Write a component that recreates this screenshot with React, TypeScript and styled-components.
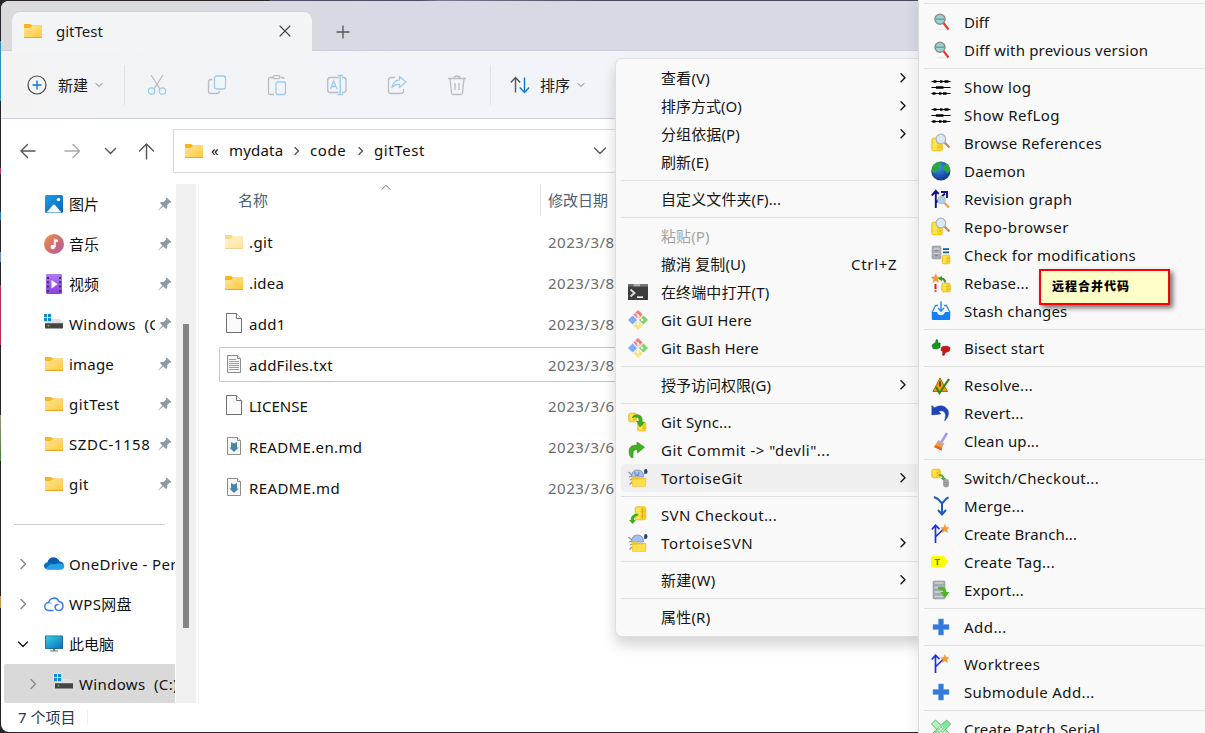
import React from "react";
import styled, { createGlobalStyle } from "styled-components";

const GlobalStyle = createGlobalStyle`
  * { box-sizing: border-box; }
  body {
    margin: 0;
    overflow: hidden;
    font-family: "Noto Sans", "Noto Sans CJK SC", sans-serif;
    font-size: 15px;
    line-height: 20px;
    color: #1a1a1a;
  }
  svg { display: block; flex: none; overflow: visible; }
`;

const Desktop = styled.div`
  position: relative;
  width: 1205px;
  height: 733px;
  overflow: hidden;
  padding: 1px 0 1px 1px;
  background:
    linear-gradient(#2e8fbf, #2e8fbf) 0 41px / 1px 60px no-repeat,
    linear-gradient(#c23a6a, #c23a6a) 0 168px / 1px 6px no-repeat,
    linear-gradient(#2f7fc0, #2f7fc0) 0 212px / 1px 8px no-repeat,
    linear-gradient(#6a93bd, #6a93bd) 0 252px / 1px 10px no-repeat,
    linear-gradient(#b8304a, #b8304a) 0 285px / 1px 60px no-repeat,
    linear-gradient(#9a9a80, #3f7f35) 0 415px / 1px 46px no-repeat,
    linear-gradient(#c69058, #c69058) 0 596px / 1px 12px no-repeat,
    linear-gradient(90deg, #2a2528 0 269px, #4c4c66 270px 420px, #777a90 440px, #4b4a5c 600px 918px) 0 0 / 100% 1px no-repeat,
    #25242a;
`;

const Window = styled.div`
  display: flex;
  flex-direction: column;
  height: 731px;
  border-radius: 8px 0 0 8px;
  overflow: hidden;
  background: #fff;
`;

const TabBar = styled.div`
  display: flex;
  align-items: flex-end;
  height: 50px;
  flex: none;
  padding-left: 11px;
  background: linear-gradient(90deg, #dbdbdc 0, #dadbe0 200px, #d7d9e5 420px);
  box-shadow: inset 0 -1px #cdced9;
`;

const Tab = styled.div`
  display: flex;
  align-items: center;
  width: 300px;
  height: 39px;
  padding: 0 20px 1px 11px;
  border-radius: 8px 8px 0 0;
  background: #f3f4f6;
  box-shadow: 0 -1px 1px #cfcfd6;
`;

const TabTitle = styled.span`
  flex: 1;
  margin-left: 13px;
`;

const NewTab = styled.div`
  display: flex;
  align-items: center;
  height: 39px;
  margin-left: 24px;
`;

const Toolbar = styled.div`
  display: flex;
  align-items: center;
  flex: none;
  height: 68px;
  padding-left: 26px;
  border-bottom: 1px solid #cbccd8;
  background: linear-gradient(90deg, #f3f3f4, #f2f4f9 420px);
`;

const ToolButton = styled.div`
  display: flex;
  align-items: center;
`;

const ToolLabel = styled.span<{ $left: number }>`
  margin: 0 7px 0 ${(p) => p.$left}px;
`;

const ToolDivider = styled.div<{ $left: number; $right: number }>`
  width: 1px;
  height: 40px;
  margin: 0 ${(p) => p.$right}px 0 ${(p) => p.$left}px;
  background: #e1e2e6;
`;

const ToolIcons = styled.div`
  display: flex;
  gap: 40px;
`;

const AddressRow = styled.div`
  display: flex;
  align-items: flex-start;
  flex: none;
  height: 65px;
  padding: 10px 0 0 17px;
`;

const NavButtons = styled.div`
  display: flex;
  align-items: center;
  width: 155px;
  height: 43px;
`;

const NavSlot = styled.div<{ $w: number }>`
  width: ${(p) => p.$w}px;
`;

const AddressBox = styled.div`
  display: flex;
  align-items: center;
  width: 760px;
  height: 44px;
  padding: 0 0 1px 10px;
  border: 1px solid #d9d9d9;
  border-right: 0;
`;

const Crumb = styled.span<{ $left: number; $w: number; $ls?: number }>`
  width: ${(p) => p.$w}px;
  margin-left: ${(p) => p.$left}px;
  padding-bottom: 2px;
  letter-spacing: ${(p) => p.$ls ?? 0}px;
  color: #111;
  white-space: nowrap;
`;

const Body = styled.div`
  display: flex;
  flex: none;
  height: 519px;
  overflow: hidden;
`;

const Sidebar = styled.div`
  width: 174px;
  padding-left: 3px;
  overflow: hidden;
`;

const SideItem = styled.div<{ $indent?: number; $active?: boolean }>`
  display: flex;
  align-items: center;
  height: ${(p) => (p.$active ? 39 : 40)}px;
  padding-left: ${(p) => p.$indent ?? 0}px;
  color: #111;
  background: ${(p) => (p.$active ? "#d9d9d9" : "transparent")};
  border-radius: 2px 0 0 2px;
  white-space: pre;
`;

const ExpandSlot = styled.div`
  display: flex;
  flex: none;
  justify-content: center;
  width: 38px;
`;

const SideIcon = styled.div`
  flex: none;
  margin-left: 2px;
`;

const SideLabel = styled.span<{ $pinned?: boolean; $ls?: number }>`
  flex: none;
  width: ${(p) => (p.$pinned ? "86px" : "auto")};
  margin-left: 5px;
  margin-right: 3px;
  letter-spacing: ${(p) => p.$ls ?? 0}px;
  overflow: hidden;
`;

const SideRule = styled.div`
  width: 151px;
  height: 1px;
  margin: 20px 0 19px 10px;
  background: #d0d0d0;
`;

const ScrollTrack = styled.div`
  width: 20px;
  height: 519px;
  margin-left: 1px;
  padding: 140px 0 0 7px;
  background: #f0f0f0;
`;

const ScrollThumb = styled.div`
  width: 6px;
  height: 304px;
  background: #858585;
`;

const FilePane = styled.div`
  flex: 1;
  margin-left: 2px;
  border-left: 1px solid #f3f3f3;
`;

const FileHeader = styled.div`
  display: flex;
  height: 37px;
  padding-left: 39px;
  color: #4c607a;
`;

const HeaderName = styled.div`
  display: flex;
  width: 303px;
  height: 32px;
  align-items: center;
  border-right: 1px solid #e3e3e3;
`;

const SortMark = styled.div`
  align-self: flex-start;
  margin: 0 0 0 113px;
`;

const HeaderDate = styled.div`
  display: flex;
  align-items: center;
  height: 32px;
  padding-left: 7px;
`;

const FileRow = styled.div<{ $selected?: boolean }>`
  display: flex;
  align-items: center;
  height: 35px;
  margin: 3px 0 6px 20px;
  padding-left: 4px;
  border: 1px solid ${(p) => (p.$selected ? "#99d1ff" : "transparent")};
  border-radius: 1px;
`;

const FileName = styled.span<{ $ls: number }>`
  width: 299px;
  margin-left: 5px;
  letter-spacing: ${(p) => p.$ls}px;
  color: #111;
`;

const FileDate = styled.span`
  letter-spacing: 0.5px;
  color: #6d6d6d;
`;

const StatusBar = styled.div`
  display: flex;
  align-items: center;
  height: 27px;
  padding-left: 17px;
  color: #26374f;
`;

const StatusText = styled.span`
  padding-right: 12px;
  border-right: 1px solid #eee;
  line-height: 14px;
`;

const ContextMenu = styled.div`
  position: absolute;
  left: 615px;
  top: 58px;
  width: 310px;
  height: 579px;
  padding: 5px;
  border: 1px solid #dfdfe1;
  border-radius: 7px;
  background: #f9f9f9;
  box-shadow: 0 8px 14px rgba(0, 0, 0, 0.17);
`;

const SubMenu = styled.div`
  position: absolute;
  left: 918px;
  top: -1px;
  width: 300px;
  height: 745px;
  padding-left: 5px;
  border-left: 1px solid #dcdcde;
  background: #f9f9f9;
  box-shadow: -2px 0 12px rgba(0, 0, 0, 0.08);
`;

const MenuItem = styled.div<{ $active?: boolean; $disabled?: boolean }>`
  display: flex;
  align-items: center;
  height: 28px;
  padding-left: 7px;
  border-radius: 4px;
  white-space: pre;
  color: ${(p) => (p.$disabled ? "#a3a3a3" : "#151515")};
  background: ${(p) => (p.$active ? "#efefef" : "transparent")};
`;

const MenuIcon = styled.div`
  width: 33px;
  height: 20px;
`;

const MenuLabel = styled.span<{ $ls?: number }>`
  flex: 1;
  letter-spacing: ${(p) => p.$ls ?? 0}px;
`;

const Shortcut = styled.span`
  width: 68px;
  letter-spacing: 0.7px;
`;

const ArrowSlot = styled.div`
  width: 19px;
`;

const MenuRule = styled.div`
  height: 1px;
  margin: 4px 0;
  background: #e1e1e1;
`;

const Tip = styled.div`
  position: absolute;
  left: 1039px;
  top: 269px;
  width: 131px;
  height: 36px;
  padding: 6px 0 0 11px;
  border: 2px solid #f80208;
  background: #ffffc8;
  box-shadow: 3px 3px 5px rgba(0, 0, 0, 0.55);
  font: 900 12px/17px "Noto Sans CJK SC", sans-serif;
  letter-spacing: 1px;
  color: #000;
`;

const Line = ({ d, c = "#555", w = 1.3, s = 20 }: { d: string; c?: string; w?: number; s?: number }) => (
  <svg width={s} height={s} viewBox={`0 0 ${s} ${s}`} fill="none" stroke={c} strokeWidth={w} strokeLinecap="round" strokeLinejoin="round">
    <path d={d} />
  </svg>
);

const Folder = ({ faded }: { faded?: boolean }) => (
  <svg width="20" height="20" viewBox="0 0 20 20" opacity={faded ? 0.5 : 1}>
    <defs>
      <linearGradient id="fold" x1="0" y1="0" x2="1" y2="1">
        <stop offset="0" stopColor="#ffe69a" />
        <stop offset="1" stopColor="#ffc93c" />
      </linearGradient>
    </defs>
    <path d="M1 3.6Q1 3 1.6 3H7l2 1.6h9.4q.6 0 .6.6V9H1Z" fill="#f8b51c" />
    <path d="M1 7h5.5L9 5h9.4q.6 0 .6.6V16H1Z" fill="url(#fold)" />
    <path d="M1 16h18v.5q0 .5-.5.5h-17q-.5 0-.5-.5Z" fill="#e9a820" />
  </svg>
);

const Drive = () => (
  <svg width="20" height="20" viewBox="0 0 20 20">
    <path d="M4 5h12l3 4H1Z" fill="#dfe1e6" />
    <rect x="1" y="9" width="18" height="5.500" rx=".6" fill="#454545" />
    <rect x="1" y="9" width="18" height="1" fill="#6a6a6a" />
    <rect x="3.700" y="11" width="1.600" height="1.400" fill="#4be04b" />
    <path d="M-.5-.5H7.500V7.500H-.5Z" fill="#fff" opacity=".6" />
    <path d="M0 0h3.200v3.200H0ZM4 0h3.200v3.200H4ZM0 4h3.200v3.200H0ZM4 4h3.200v3.200H4Z" fill="#118bd8" />
  </svg>
);

const Picture = () => (
  <svg width="20" height="20" viewBox="0 0 20 20">
    <defs>
      <linearGradient id="pic" x1="0" y1="0" x2="1" y2="1">
        <stop offset="0" stopColor="#1ea0e8" />
        <stop offset="1" stopColor="#0562b5" />
      </linearGradient>
    </defs>
    <rect x="1" y="1" width="18" height="18" rx="1.500" fill="url(#pic)" />
    <path d="M2.500 18.500 9 11q1-1 2 0l6.500 7.500Z" fill="#f4f9ff" />
    <circle cx="14.500" cy="5.500" r="1.700" fill="#fff" />
  </svg>
);

const Music = () => (
  <svg width="20" height="20" viewBox="0 0 20 20">
    <defs>
      <linearGradient id="mus" x1="0" y1="0" x2="1" y2="1">
        <stop offset="0" stopColor="#f0934c" />
        <stop offset=".6" stopColor="#cc6a72" />
        <stop offset="1" stopColor="#a35fc0" />
      </linearGradient>
    </defs>
    <circle cx="10" cy="10" r="10" fill="url(#mus)" />
    <circle cx="8.800" cy="13" r="2.300" fill="#fff" />
    <path d="M10.200 13V5l3.300.8v2l-2-.3V13Z" fill="#fff" stroke="#fff" strokeWidth=".5" />
  </svg>
);

const Video = () => (
  <svg width="20" height="20" viewBox="0 0 20 20">
    <defs>
      <linearGradient id="vid" x1="0" y1="0" x2="0" y2="1">
        <stop offset="0" stopColor="#b07af2" />
        <stop offset="1" stopColor="#8a3fdc" />
      </linearGradient>
    </defs>
    <rect x="2" y="0" width="16" height="20" rx="1.200" fill="url(#vid)" />
    <path d="M4 3v15M16 3v15" stroke="#472a78" strokeWidth="2" strokeDasharray="2 2.300" />
    <path d="M7.500 6v8.400l6-4.200Z" fill="#fff" />
  </svg>
);

const Cloud = () => (
  <svg width="20" height="20" viewBox="0 0 20 20">
    <path d="M5 15.500Q0 15.500 0 11.800q0-3 3.500-3.600Q5 3.400 9.500 3.400q4.300 0 5.800 3.800Q20 8 20 12q0 3.500-4 3.500Z" fill="#0f6cbd" />
    <path d="M3.500 8.200Q6 7.500 8 9l3.500 2.200 4-4Q13 3.400 9.500 3.400 5 3.400 3.500 8.200Z" fill="#0a5cab" />
    <path d="M2 15q2-5 7-4.800 3 .2 4-.7 6-.5 7 2.500 0 3.500-4 3.500H5Q3 15.500 2 15Z" fill="#28a0e8" />
  </svg>
);

const WpsCloud = () => (
  <svg width="20" height="20" viewBox="0 0 20 20" fill="none" stroke="#3d7cf0" strokeWidth="1.500" strokeLinecap="round">
    <path d="M9 16.500H4.800A4 4 0 0 1 4.700 8.500a5.400 5.400 0 0 1 10.300-1A4.600 4.600 0 0 1 15.500 16.500q-4 .2-4.500-3a3 3 0 0 1 3-3" />
    <path d="M4.700 8.500q2 0 3.200 1.500" opacity=".4" />
  </svg>
);

const Monitor = () => (
  <svg width="20" height="20" viewBox="0 0 20 20">
    <defs>
      <linearGradient id="mon" x1="0" y1="0" x2="1" y2="1">
        <stop offset="0" stopColor="#36d0e0" />
        <stop offset="1" stopColor="#0d6fc0" />
      </linearGradient>
    </defs>
    <rect x="1" y="1.500" width="18" height="13.500" rx=".8" fill="#1c6690" />
    <rect x="1.800" y="2.300" width="16.400" height="12" fill="url(#mon)" />
    <path d="M9 15h2v1.500H9ZM6 16.500h8v1H6Z" fill="#6b7780" />
  </svg>
);

const Pin = () => (
  <svg width="14" height="14" viewBox="0 0 14 14" fill="#8f9aa2">
    <path d="M8.600.5 13.400 5 12.300 6 11.400 5.700 9.300 8.100 9.200 11 8 12.100 5.300 9.400.7 13.300.4 13 4.400 8.400 2 6 3 4.900 5.800 4.800 8.200 2.600 7.700 1.500Z" />
  </svg>
);

const Page = ({ kind }: { kind: "blank" | "text" | "md" }) =>
  kind === "blank" ? (
    <svg width="20" height="20" viewBox="0 0 20 20" fill="#fafafa" stroke="#707070">
      <path d="M2.500-.5h10l5 5v14h-15Z" />
      <path d="M12.500-.5v5h5" />
    </svg>
  ) : (
    <svg width="20" height="20" viewBox="0 0 20 20" fill="#f7f7f7" stroke="#8c8c8c">
      <path d="M3.500.5h10l3 3v14h-13Z" />
      <path d="M13.500.5v3h3" />
      {kind === "text" ? (
        <path d="M5 4.500h7M5 6.500h10M5 8.500h10M5 10.500h10M5 12.500h10M5 14.500h10" stroke="#9b9b9b" />
      ) : (
        <path d="M7 5l3 1.500 3-1.500v5.500h1.700L10 15 5.300 10.500H7Z" fill="#4787a5" stroke="none" />
      )}
    </svg>
  );

const DbShape = ({ x, y, w = 10, h = 11, gray }: { x: number; y: number; w?: number; h?: number; gray?: boolean }) => (
  <g>
    <rect x={x} y={y} width={w} height={h} rx="2" fill={gray ? "#a3a6a8" : "#f8d320"} stroke={gray ? "#818486" : "#e2b41c"} strokeWidth=".5" />
    <path d={`M${x + 0.6} ${y + h / 3}q${w / 2 - 0.6} 1.600 ${w - 1.2} 0M${x + 0.6} ${y + (h * 2) / 3}q${w / 2 - 0.6} 1.600 ${w - 1.2} 0`} fill="none" stroke={gray ? "#77797b" : "#dfae1c"} strokeWidth=".7" />
    <path d={`M${x + 1.2} ${y + 1.2}h${w * 0.4}v${h - 2.4}h-${w * 0.4}Z`} fill="#fff27a" opacity={gray ? 0.1 : 0.6} />
  </g>
);

const Star = ({ x, y, s = 1 }: { x: number; y: number; s?: number }) => (
  <path transform={`translate(${x} ${y}) scale(${s})`} d="M5 0 6.400 3.400 10 3.700 7.300 6 8.200 9.600 5 7.700 1.800 9.600 2.700 6 0 3.700 3.600 3.400Z" fill="#f59a35" stroke="#e88b3a" strokeWidth=".3" />
);

const Tortoise = ({ eyes }: { eyes?: boolean }) => (
  <>
    <path d="M.5 4 4 7M1 9l3-1M2 12l2-1M1.500 16.500 4 14M16 6l2.500-3" stroke="#8292a8" strokeWidth="1.200" />
    <path d="M3.500 9q0-7 6-7t6 7Z" fill="#a8c0ee" stroke="#6f84a9" strokeWidth=".7" />
    {eyes && <path d="M6 5h1.500M10 5h1.500M7 7h4" stroke="#4f6ca4" strokeWidth="1.100" />}
    <ellipse cx="17.800" cy="3.500" rx="1.700" ry="2.400" fill="#21466e" />
    <path d="M4 8.500h5l1 1.500h7.500V18H4.500Z" fill="#efc436" />
    <path d="M4 11.500 18 10.500 17.500 18.500H4.500Z" fill="#fbe04a" stroke="#e0b830" strokeWidth=".5" />
  </>
);

const glyphs: Record<string, React.ReactNode> = {
  terminal: (
    <>
      <rect x="0" y="2" width="20" height="16" rx=".6" fill="#3d3d3d" />
      <path d="M0 2h5.500v2.500H0Z" fill="#6b6b6b" />
      <path d="M5.500 2h7v2.500h-7Z" fill="#b0b0b0" />
      <path d="M12.500 2H20v2.500h-7.500Z" fill="#767676" />
      <path d="m2.500 7.500 4 3.500-4 3.500" fill="none" stroke="#ddd" strokeWidth="1.900" />
      <path d="M9 15.200h6" stroke="#fff" strokeWidth="1.600" />
    </>
  ),
  git: (
    <>
      <path d="M10 0 14.600 4.600 10 9.200 5.400 4.600Z" fill="#f47c7c" />
      <path d="M4.600 5.400 9.200 10 4.600 14.600 0 10Z" fill="#7aaefc" />
      <path d="M15.400 5.400 20 10 15.400 14.600 10.800 10Z" fill="#7fd168" />
      <path d="M10 10.800 14.600 15.400 10 20 5.400 15.400Z" fill="#fae27c" />
      <path d="m7 2.500 7.500 7.500M10 6v8.500" stroke="#fff" strokeWidth="1" />
      <circle cx="10" cy="5.500" r="1.200" fill="#fff" />
      <circle cx="14.200" cy="10" r="1.200" fill="#fff" />
      <circle cx="10" cy="14.200" r="1.200" fill="#fff" />
    </>
  ),
  sync: (
    <>
      <DbShape x={0.5} y={1} w={8} h={9} />
      <DbShape x={9.500} y={10} w={8.500} h={9} />
      <path d="M4 5.500Q7 1.500 11 3t3 7l2.500.3L12 15 8.500 9l2.500.3Q11.500 6 9 5.300 6.500 4.500 4 5.500Z" fill="#3dae1c" stroke="#2a8812" strokeWidth=".5" />
    </>
  ),
  commit: (
    <path d="M1 11Q1 5 9 5V2l7.500 5.200L9.500 13v-3.500Q5 9.500 5 13v4.500H3Q1 15 1 11Z" fill="#43b023" stroke="#2b8613" strokeWidth=".6" />
  ),
  tortoiseGit: <Tortoise eyes />,
  tortoiseSvn: <Tortoise />,
  svnCheckout: (
    <>
      <DbShape x={7} y={1.500} w={11} h={13.500} />
      <path d="M14.500 3v11" stroke="#e0a80f" />
      <path d="M10.500 10.500Q5.500 11.500 5.800 15H8L4.500 19 1 15h1.800Q2.500 9 10 8.500Z" fill="#3dae1c" />
    </>
  ),
  diff: (
    <>
      <ellipse cx="10" cy="17.500" rx="5" ry="1" fill="#ececec" />
      <path d="m12.500 11 5 6.500" stroke="#e83d25" strokeWidth="2.200" />
      <circle cx="9" cy="7.200" r="5" fill="#9ed3d2" stroke="#8a9090" strokeWidth="1.500" />
      <path d="M5 7.200h8" stroke="#4f9d9c" strokeWidth="1.200" />
    </>
  ),
  log: (
    <>
      <path d="M.5 4.500h19M.5 10.500h19M.5 16.500h19" stroke="#000" strokeWidth="1" />
      <path d="M2.500 4.500h3M9 4.500h2.500M13.500 4.500h4M5 10.500h7.500M1.500 16.500h3M8 16.500h2.500M12 16.500h3.500" stroke="#000" strokeWidth="2.600" />
    </>
  ),
  browse: (
    <>
      <DbShape x={0.6} y={5} w={11} h={13} />
      <path d="m13.500 9.500 5 5" stroke="#c98e5c" strokeWidth="2.400" />
      <circle cx="9.800" cy="6" r="4.800" fill="#dbe9f7" stroke="#a8b3bf" strokeWidth="1.200" />
    </>
  ),
  globe: (
    <>
      <defs>
        <radialGradient id="glb" cx=".4" cy=".3" r=".75">
          <stop offset="0" stopColor="#3b9af0" />
          <stop offset="1" stopColor="#0a2f86" />
        </radialGradient>
      </defs>
      <circle cx="9.800" cy="10" r="9.600" fill="url(#glb)" />
      <path d="M2 5Q5 .8 9 .7l1 2-2 3 1 2-3 1.500-1.500 3L1 10Q.8 7 2 5ZM12 4l4.500-1Q19 6 19.300 9l-3 4-1.500-3-3-1.500Z" fill="#2ba836" />
    </>
  ),
  graph: (
    <>
      <path d="M4.800 19V3M.8 6.500l4-4.500 3 3M5 13.500l9-9M10 3h6v6" fill="none" stroke="#12128c" strokeWidth="1.900" />
      <path d="m12.500 13 5.500 5.500" stroke="#f0964c" strokeWidth="2" />
      <circle cx="10.500" cy="11" r="3.800" fill="#a7d0e6" stroke="#b3bcc4" />
    </>
  ),
  check: (
    <>
      <rect x="1" y="1" width="9" height="13" rx="1" fill="#a9adb1" stroke="#9ba0a4" strokeWidth=".6" />
      <path d="M2.500 4h6M2.500 8.500h6" stroke="#cdd0d3" strokeWidth="1.600" />
      <path d="M4 5.700h3M4 10.200h3" stroke="#6f7478" strokeWidth="1" />
      <path d="M12 4.200h6M12 7.300h6" stroke="#175f95" strokeWidth="1.700" />
      <DbShape x={11} y={10} w={8} h={9} />
    </>
  ),
  rebase: (
    <>
      <Star x={0} y={0.5} s={0.95} />
      <path d="M4.500 11v5" stroke="#f01010" strokeWidth="2" />
      <path d="M3.500 17.300h2v1.400h-2Z" fill="#f01010" />
      <DbShape x={10.500} y={10} w={9} h={9} />
      <path d="M7 5.500 11 3v1.500q4 .5 4 5h-2Q13 7 11 6.800V8.500Z" fill="#3c9630" />
    </>
  ),
  stash: (
    <>
      <path d="M1 11.500 4.500 4.500H7M13 4.500h2.500L19 11.500" fill="none" stroke="#2a8cf5" strokeWidth="1.300" />
      <path d="M.8 11H6q1 3.200 4 3.200t4-3.200h5.200V18q0 1-1 1H1.800q-1 0-1-1Z" fill="#1381f5" />
      <path d="M10 .5V10M7 7l3 3.200L13 7" fill="none" stroke="#2a8cf5" strokeWidth="1.500" />
    </>
  ),
  bisect: (
    <>
      <path d="M1 7 4.500 4.500 5.300 1.500l1.400.5L6.700 5h2.500L9 9.500 6 11 2 10.500Z" fill="#139a1c" stroke="#0c6413" strokeWidth=".6" />
      <path d="m10.500 9 5-1 3.500 1.500-.5 3.500-4 1.500L13 17.500l-1.500-.5.5-3.500-2-1Z" fill="#cf1616" stroke="#8e1010" strokeWidth=".6" />
    </>
  ),
  resolve: (
    <>
      <path d="M9 3 16.500 16.500H2Z" fill="#e9a310" stroke="#a36d12" />
      <path d="M9 6.500v5" stroke="#5d4414" strokeWidth="2" />
      <path d="m5 12 3.500 6L18 4" fill="none" stroke="#3e7f1b" strokeWidth="2.200" />
    </>
  ),
  revert: (
    <path d="M.8 2.500 3.500 4.800Q9 1.200 14 4q5 3.500 3 9-1 3-3.500 5 2-6 .3-8.500-2.300-3-6.300-1.200L10 11 .8 12Z" fill="#1d45b8" stroke="#1536a0" strokeWidth=".4" />
  ),
  clean: (
    <>
      <path d="m16 2-5.500 9" stroke="#9a9cf0" strokeWidth="2.400" />
      <path d="m7.500 9 6 3.500-2 2.500L6 11.500Z" fill="#b9a7de" />
      <path d="m6.500 10.500 5.500 3.500-1.500 5.500L3 16Z" fill="#f39a3c" />
      <path d="m5 14.500 6 2.500-.6 2.500L3 16Z" fill="#e85a30" />
    </>
  ),
  switch: (
    <>
      <DbShape x={0.6} y={1} w={9} h={9} />
      <path d="M8 6q5 0 5.500 4h1.800l-2.500 3L9.500 10h1.700Q11 8 8 8Z" fill="#54b03c" />
      <DbShape x={12.500} y={11.500} w={5} h={7.500} gray />
    </>
  ),
  merge: (
    <path d="m3 1 4 2 4 4.500L15.500 2.500l2-1M11 7.500v10M7 14l4 4.500 4-4.500" fill="none" stroke="#1f59bd" strokeWidth="2" />
  ),
  branch: (
    <>
      <path d="M4.500 19V2M.8 5.500 4.500 1.200l4 4M4.800 12.500 12 5.500" fill="none" stroke="#1b2ff0" strokeWidth="1.700" />
      <Star x={9.500} y={0.2} s={0.88} />
    </>
  ),
  tag: (
    <>
      <path d="M0 4h13l4.500 5.500L13 15H0Z" fill="#ffff00" />
      <text x="3.600" y="12.600" fontSize="9" fontWeight="700" fill="#3a8a1e" fontFamily="Liberation Sans, sans-serif">T</text>
    </>
  ),
  export: (
    <>
      <rect x="2" y="1" width="12" height="18" rx="1" fill="#a5aaae" stroke="#969b9f" strokeWidth=".6" />
      <path d="M3.500 3h9M3.500 7.500h9M3.500 12h9M3.500 16.500h9" stroke="#d0d4d7" strokeWidth="1.500" />
      <path d="M7 7q8-1.500 8.500 5h3l-4.500 6-4.500-6h3Q12 9.500 7 9.500Z" fill="#4fb52b" />
    </>
  ),
  plus: <path d="M7.500 2h5v5.500H18v5h-5.500V18h-5v-5.500H2v-5h5.500Z" fill="#3279d8" stroke="#69a2ea" strokeWidth=".6" />,
  patch: (
    <>
      <path d="m4.500 1 15 14.500-4.500 4.500L.5 5Z" fill="#b5f2c2" stroke="#44a558" strokeWidth=".8" />
      <path d="m15.500 1 4 4L5 20 .5 15.500Z" fill="#7eea98" stroke="#44a558" strokeWidth=".8" />
      <path d="m10 6 4 4.200-4 4.300-4-4.300Z" fill="#d5fadd" />
      <path d="M10 8v.1M8 10v.1M12 10v.1M10 12v.1" stroke="#35a04c" strokeWidth="1.400" strokeLinecap="round" />
    </>
  ),
};

const Glyph = ({ name }: { name?: string }) => (
  <MenuIcon>
    {name && (
      <svg width="20" height="20" viewBox="0 0 20 20" fill="none">
        {glyphs[name]}
      </svg>
    )}
  </MenuIcon>
);

type Entry = { t: string; i?: string; arrow?: boolean; key?: string; off?: boolean; on?: boolean; ls?: number } | null;

const contextEntries: Entry[] = [
  { t: "查看(V)", arrow: true, ls: 0.2 },
  { t: "排序方式(O)", arrow: true },
  { t: "分组依据(P)", arrow: true, ls: 0.1 },
  { t: "刷新(E)", ls: 0.1 },
  null,
  { t: "自定义文件夹(F)...", ls: 0.1 },
  null,
  { t: "粘贴(P)", off: true, ls: 0.1 },
  { t: "撤消 复制(U)", key: "Ctrl+Z", ls: 0.1 },
  { t: "在终端中打开(T)", i: "terminal", ls: 0.1 },
  { t: "Git GUI Here", i: "git", ls: 0.17 },
  { t: "Git Bash Here", i: "git", ls: 0.1 },
  null,
  { t: "授予访问权限(G)", arrow: true },
  null,
  { t: "Git Sync...", i: "sync", ls: 0.2 },
  { t: 'Git Commit -> "devli"...', i: "commit", ls: 0.5 },
  { t: "TortoiseGit", i: "tortoiseGit", arrow: true, on: true, ls: 0.45 },
  null,
  { t: "SVN Checkout...", i: "svnCheckout", ls: 0.35 },
  { t: "TortoiseSVN", i: "tortoiseSvn", arrow: true, ls: 0.65 },
  null,
  { t: "新建(W)", arrow: true, ls: 0.3 },
  null,
  { t: "属性(R)", ls: 0.2 },
];

const tortoiseEntries: Entry[] = [
  null,
  { t: "Diff", i: "diff" },
  { t: "Diff with previous version", i: "diff", ls: 0.19 },
  null,
  { t: "Show log", i: "log", ls: 0.4 },
  { t: "Show RefLog", i: "log", ls: 0.45 },
  { t: "Browse References", i: "browse", ls: 0.25 },
  { t: "Daemon", i: "globe", ls: 0.2 },
  { t: "Revision graph", i: "graph", ls: 0.28 },
  { t: "Repo-browser", i: "browse", ls: 0.55 },
  { t: "Check for modifications", i: "check", ls: 0.24 },
  { t: "Rebase...", i: "rebase", ls: 0.2 },
  { t: "Stash changes", i: "stash", ls: 0.15 },
  null,
  { t: "Bisect start", i: "bisect", ls: 0.15 },
  null,
  { t: "Resolve...", i: "resolve", ls: 0.3 },
  { t: "Revert...", i: "revert", ls: 0.3 },
  { t: "Clean up...", i: "clean", ls: 0.1 },
  null,
  { t: "Switch/Checkout...", i: "switch", ls: 0.3 },
  { t: "Merge...", i: "merge", ls: 0.35 },
  { t: "Create Branch...", i: "branch", ls: 0.07 },
  { t: "Create Tag...", i: "tag", ls: 0.32 },
  { t: "Export...", i: "export", ls: 0.2 },
  null,
  { t: "Add...", i: "plus", ls: 0.45 },
  null,
  { t: "Worktrees", i: "branch", ls: 0.45 },
  { t: "Submodule Add...", i: "plus", ls: 0.38 },
  null,
  { t: "Create Patch Serial", i: "patch", ls: 0.2 },
];

const Entries = ({ list }: { list: Entry[] }) => (
  <>
    {list.map((e, n) =>
      e ? (
        <MenuItem key={n} $active={e.on} $disabled={e.off}>
          <Glyph name={e.i} />
          <MenuLabel $ls={e.ls}>{e.t}</MenuLabel>
          {e.key && <Shortcut>{e.key}</Shortcut>}
          {e.arrow && (
            <ArrowSlot>
              <Line s={10} d="M1 .8 5 4.800 1 8.800" c="#111" w={1.4} />
            </ArrowSlot>
          )}
        </MenuItem>
      ) : (
        <MenuRule key={n} />
      )
    )}
  </>
);

const pinned: [string, React.ReactNode, number][] = [
  ["图片", <Picture />, 0],
  ["音乐", <Music />, 0],
  ["视频", <Video />, 0],
  ["Windows  (C:)", <Drive />, 0.4],
  ["image", <Folder />, 0.2],
  ["gitTest", <Folder />, 0.55],
  ["SZDC-1158", <Folder />, 0.55],
  ["git", <Folder />, 0.4],
];

const files: [string, string, React.ReactNode, number][] = [
  [".git", "2023/3/8", <Folder faded />, 0.4],
  [".idea", "2023/3/8", <Folder />, 0.2],
  ["add1", "2023/3/8", <Page kind="blank" />, 0.3],
  ["addFiles.txt", "2023/3/8", <Page kind="text" />, 0.25],
  ["LICENSE", "2023/3/6", <Page kind="blank" />, 0],
  ["README.en.md", "2023/3/6", <Page kind="md" />, 0.35],
  ["README.md", "2023/3/6", <Page kind="md" />, 0.4],
];

const Expand = ({ open }: { open?: boolean }) => (
  <ExpandSlot>
    <Line s={10} d={open ? "M.5 3 5 7.500 9.500 3" : "M3 .5 7.500 5 3 9.500"} c={open ? "#222" : "#8a8a8a"} w={1.5} />
  </ExpandSlot>
);

const ToolGlyphs = () => {
  const g = "#b9bcc0";
  const b = "#9ccbf0";
  const box = { width: 20, height: 20, viewBox: "0 0 20 20", fill: "none", strokeWidth: 1.3 };
  return (
    <ToolIcons>
      <svg {...box}>
        <path d="M4 0 13 14M16 0 7 14" stroke={g} />
        <circle cx="4.500" cy="16" r="3.200" stroke={b} />
        <circle cx="15.500" cy="16" r="3.200" stroke={b} />
      </svg>
      <svg {...box}>
        <path d="M5.500 4.500H4Q1.500 4.500 1.500 7V16q0 2.500 2.500 2.500h6q2.500 0 2.500-2.500" stroke={g} />
        <rect x="7.500" y="1" width="11" height="13" rx="2.200" stroke={b} fill="#f2f6fb" />
      </svg>
      <svg {...box}>
        <path d="M6 2.500H3Q1.500 2.500 1.500 4V18Q1.500 19.500 3 19.500h4M14 2.500h1.500Q17 2.500 17 4" stroke={g} />
        <rect x="6" y=".7" width="7" height="3" rx="1.500" stroke={g} />
        <rect x="9" y="7" width="9.500" height="12.500" rx="1.500" stroke={b} />
      </svg>
      <svg {...box}>
        <path d="M11.500 2.500H3Q.7 2.500.7 5v10q0 2.500 2.300 2.500h8.500M15 2.500h1.500q2.500 0 2.500 2.500v10q0 2.500-2.500 2.500H15" stroke={g} />
        <path d="M10.500.5h5.500M10.500 19.500h5.500M13.200.5v19" stroke={b} strokeWidth="1.500" />
        <path d="M3.500 14 6.700 6 10 14M4.700 11.500h4" stroke={b} />
      </svg>
      <svg {...box}>
        <path d="M8 2.500H4Q1.500 2.500 1.500 5v11q0 2.500 2.500 2.500h10q2.500 0 2.500-2.500v-2" stroke={g} />
        <path d="M12.500 1.500 19 7l-6.500 5.500V9.500Q8 9 5 12.500 6 5.500 12.500 4.800Z" stroke={b} strokeLinejoin="round" />
      </svg>
      <svg {...box}>
        <path d="M1 3.500h18M7 3.500Q7 1 10 1t3 2.500M3 3.500 4.500 18q.2 1.500 1.500 1.500h8q1.300 0 1.500-1.500L17 3.500M8 8v7M12 8v7" stroke={g} />
      </svg>
    </ToolIcons>
  );
};

const crumbArrow = "M11 6.500 14.500 10l-3.500 3.500";

export default function App() {
  return (
    <Desktop>
      <GlobalStyle />
      <Window>
        <TabBar>
          <Tab>
            <Folder />
            <TabTitle>gitTest</TabTitle>
            <Line s={14} d="M2 2 12 12M12 2 2 12" c="#444" w={1.1} />
          </Tab>
          <NewTab>
            <Line s={14} d="M7 1V13M1 7H13" c="#555" />
          </NewTab>
        </TabBar>
        <Toolbar>
          <ToolButton>
            <svg width="20" height="20" viewBox="0 0 20 20" fill="none">
              <circle cx="10" cy="10" r="9" stroke="#4a4a4a" strokeWidth="1.200" />
              <path d="M10 5.500v9M5.500 10h9" stroke="#0a78d4" strokeWidth="1.400" />
            </svg>
            <ToolLabel $left={11}>新建</ToolLabel>
            <Line s={8} d="M1 2.500 4 5.500 7 2.500" c="#777" w={1} />
          </ToolButton>
          <ToolDivider $left={21} $right={22} />
          <ToolGlyphs />
          <ToolDivider $left={23} $right={19} />
          <ToolButton>
            <svg width="20" height="20" viewBox="0 0 20 20" fill="none" strokeWidth="1.400">
              <path d="M5.500 17.500V3M.8 7.500 5.500 2.500l4.700 5" stroke="#555" />
              <path d="M14.500 2.500V17M9.800 12.500l4.700 5 4.700-5" stroke="#0a78d4" />
            </svg>
            <ToolLabel $left={10}>排序</ToolLabel>
            <Line s={8} d="M1 2.500 4 5.500 7 2.500" c="#777" w={1} />
          </ToolButton>
        </Toolbar>
        <AddressRow>
          <NavButtons>
            <NavSlot $w={45}><Line d="M17 10H3M9.500 3.500 3 10l6.500 6.500" w={1.4} /></NavSlot>
            <NavSlot $w={37}><Line d="M2 10h14.500M10 3.500 16.500 10 10 16.500" c="#aaa" w={1.4} /></NavSlot>
            <NavSlot $w={37}><Line d="M5.500 7.500 10.500 12.500 15.500 7.500" w={1.4} /></NavSlot>
            <NavSlot $w={20}><Line d="M9.500 18V3M2.500 10l7-7 7 7" w={1.4} /></NavSlot>
          </NavButtons>
          <AddressBox>
            <Folder />
            <Crumb $left={7} $w={10}>«</Crumb>
            <Crumb $left={8} $w={55} $ls={0.2}>mydata</Crumb>
            <Line d={crumbArrow} w={1.4} />
            <Crumb $left={6} $w={38} $ls={0.6}>code</Crumb>
            <Line d={crumbArrow} w={1.4} />
            <Crumb $left={6} $w={219} $ls={0.6}>gitTest</Crumb>
            <Line s={14} d="M1.500 4 7 9.500 12.500 4" w={1.3} />
          </AddressBox>
        </AddressRow>
        <Body>
          <Sidebar>
            {pinned.map(([name, icon, ls]) => (
              <SideItem key={name} $indent={40}>
                {icon}
                <SideLabel $pinned $ls={ls}>{name}</SideLabel>
                <Pin />
              </SideItem>
            ))}
            <SideRule />
            <SideItem><Expand /><SideIcon><Cloud /></SideIcon><SideLabel $ls={0.35}>OneDrive - Personal</SideLabel></SideItem>
            <SideItem><Expand /><SideIcon><WpsCloud /></SideIcon><SideLabel $ls={0.3}>WPS网盘</SideLabel></SideItem>
            <SideItem><Expand open /><SideIcon><Monitor /></SideIcon><SideLabel>此电脑</SideLabel></SideItem>
            <SideItem $active $indent={10}><Expand /><SideIcon><Drive /></SideIcon><SideLabel $ls={0.35}>Windows  (C:)</SideLabel></SideItem>
          </Sidebar>
          <ScrollTrack><ScrollThumb /></ScrollTrack>
          <FilePane>
            <FileHeader>
              <HeaderName>
                名称
                <SortMark><Line s={10} d="M.8 5.500 5 1.300 9.200 5.500" c="#777" w={1} /></SortMark>
              </HeaderName>
              <HeaderDate>修改日期</HeaderDate>
            </FileHeader>
            {files.map(([name, date, icon, ls]) => (
              <FileRow key={name} $selected={name === "addFiles.txt"}>
                {icon}
                <FileName $ls={ls}>{name}</FileName>
                <FileDate>{date}</FileDate>
              </FileRow>
            ))}
          </FilePane>
        </Body>
        <StatusBar><StatusText>7 个项目</StatusText></StatusBar>
      </Window>
      <ContextMenu><Entries list={contextEntries} /></ContextMenu>
      <SubMenu><Entries list={tortoiseEntries} /></SubMenu>
      <Tip>远程合并代码</Tip>
    </Desktop>
  );
}
